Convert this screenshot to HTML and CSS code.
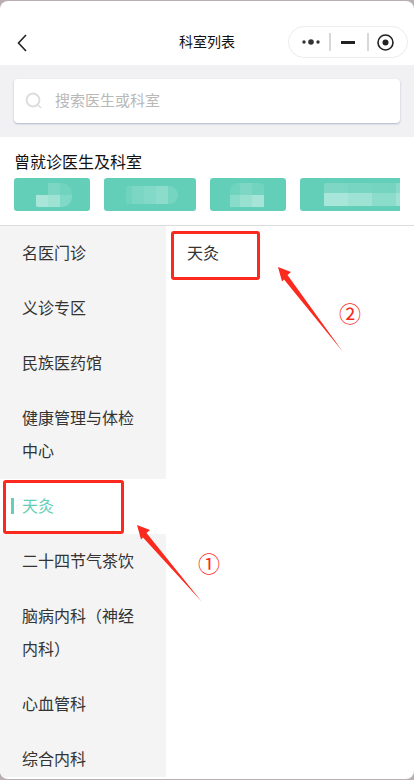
FILE: index.html
```html
<!DOCTYPE html>
<html lang="zh-CN">
<head>
  <meta name="viewport" content="width=device-width, initial-scale=1.0">
  <meta charset="UTF-8">
  <title>科室列表</title>
  <link rel="stylesheet" href="styles.css">
</head>
<body>
  <div class="page">
    <!-- 导航栏 -->
    <header class="nav">
      <svg class="nav-back" width="10" height="18" viewBox="0 0 10 18"><path d="M9 1 1.500 9 9 17" fill="none" stroke="#222" stroke-width="1.6"/></svg>
      <span class="nav-title">科室列表</span>
      <div class="capsule">
        <svg width="20" height="6" viewBox="0 0 20 6"><circle cx="3" cy="3" r="1.7" fill="#333"/><circle cx="10" cy="3" r="2.8" fill="#333"/><circle cx="17" cy="3" r="1.7" fill="#333"/></svg>
        <span class="capsule-line"></span>
        <span class="capsule-dash"></span>
        <span class="capsule-line"></span>
        <svg width="17" height="17" viewBox="0 0 17 17"><circle cx="8.500" cy="8.500" r="7.500" fill="none" stroke="#222" stroke-width="1.6"/><circle cx="8.500" cy="8.500" r="3" fill="#222"/></svg>
      </div>
    </header>

    <!-- 搜索 -->
    <div class="search-wrap">
      <div class="search-box">
        <svg width="18" height="18" viewBox="0 0 18 18"><circle cx="8" cy="8" r="6.400" fill="none" stroke="#ddd" stroke-width="2"/><path d="M13 13l3 3" stroke="#ddd" stroke-width="1.6"/></svg>
        <span class="search-text">搜索医生或科室</span>
      </div>
    </div>

    <!-- 曾就诊 -->
    <section class="history">
      <h2>曾就诊医生及科室</h2>
      <div class="tags">
        <div class="tag tag1"><i class="blur b1"></i></div>
        <div class="tag tag2"><i class="blur b2"></i></div>
        <div class="tag tag1"><i class="blur b3"></i></div>
        <div class="tag tag3"><i class="blur b4"></i></div>
      </div>
    </section>

    <!-- 科室列表 -->
    <div class="dept">
      <ul class="side">
        <li>名医门诊</li>
        <li>义诊专区</li>
        <li>民族医药馆</li>
        <li>健康管理与体检中心</li>
        <li class="active">天灸</li>
        <li>二十四节气茶饮</li>
        <li>脑病内科（神经内科）</li>
        <li>心血管科</li>
        <li>综合内科</li>
      </ul>
      <div class="sub">
        <div class="sub-item">天灸</div>
      </div>
    </div>

    <!-- 标注 -->
    <div class="mark mark1"></div>
    <div class="mark mark2"></div>
    <svg class="arrow arrow1" width="70" height="82" viewBox="0 0 70 82"><path d="M2 2 15 7 11.500 10 67 79 8 14.500 6 16.500Z" fill="#fb2a1e"/></svg>
    <svg class="arrow arrow2" width="70" height="90" viewBox="0 0 70 90"><path d="M2 2 15 7 11.500 10 67 87 8 14.500 6 16.500Z" fill="#fb2a1e"/></svg>
    <span class="num num1">①</span>
    <span class="num num2">②</span>
  </div>
</body>
</html>
```

FILE: styles.css
```css
* {
  margin: 0;
  padding: 0;
  box-sizing: border-box;
}

body {
  background-color: #b9aeb0;
  font-family: "Noto Sans CJK SC", "Noto Sans", sans-serif;
  height: 780px;
  overflow: hidden;
}

.page {
  position: relative;
  width: 414px;
  height: 778px;
  margin-top: 1px;
  background-color: #fff;
  border-radius: 8px;
  overflow: hidden;
}

/* 导航栏 */
.nav {
  position: relative;
  height: 64px;
  display: flex;
  justify-content: center;
  align-items: flex-start;
  padding-top: 25px;
}

.nav-back {
  position: absolute;
  left: 17px;
  top: 33px;
}

.nav-title {
  font-size: 14px;
  line-height: 30px;
  color: #111;
}

.capsule {
  position: absolute;
  left: 288px;
  top: 25px;
  width: 120px;
  height: 32px;
  border: 1px solid #ececec;
  border-radius: 16px;
  display: flex;
  align-items: center;
  padding-left: 12px;
}

.capsule-line {
  width: 2px;
  height: 18px;
  background-color: #d8d8d8;
  margin: 0 10px 0 8px;
}

.capsule-dash {
  width: 14px;
  height: 3px;
  background-color: #222;
}

.capsule-dash + .capsule-line {
  margin: 0 8px 0 12px;
}

/* 搜索 */
.search-wrap {
  height: 72px;
  background-color: #f1f1f3;
  padding: 14px 14px 0;
}

.search-box {
  height: 44px;
  background-color: #fff;
  border-radius: 4px;
  box-shadow: 0 1px 2px rgba(120, 135, 170, 0.55);
  display: flex;
  align-items: center;
  gap: 12px;
  padding-left: 11px;
}

.search-text {
  font-size: 15px;
  line-height: 20px;
  padding-bottom: 2px;
  color: #b8b8b8;
}

/* 曾就诊 */
.history {
  height: 89px;
  padding: 13px 14px 0;
  border-bottom: 1px solid #dcdcdc;
}

.history h2 {
  font-size: 16px;
  font-weight: 400;
  line-height: 22px;
  color: #111;
  margin-bottom: 6px;
}

.tags {
  display: flex;
  gap: 14px;
  overflow: hidden;
}

.tag {
  height: 33px;
  flex-shrink: 0;
  background-color: #64cfb8;
  border-radius: 3px;
  display: flex;
  align-items: center;
}

.tag1 { width: 76px; }
.tag2 { width: 92px; }
.tag3 { width: 112px; }

/* 打码 */
.blur {
  display: block;
  height: 24px;
  border-radius: 2px 10px 10px 2px;
}

.b1 {
  width: 36px;
  margin-left: 22px;
  background:
    linear-gradient(to right, #a9e6d9 12px, #9de2d3 12px, #9de2d3 24px, #80d9c6 24px) bottom / 100% 50% no-repeat,
    linear-gradient(to right, #64cfb8 12px, #7bd7c3 12px, #7bd7c3 24px, #6fd3be 24px) top / 100% 50% no-repeat;
}

.b2 {
  width: 52px;
  height: 18px;
  margin-left: 22px;
  background: linear-gradient(to right, #70d3be 6px, #7bd7c4 6px, #7bd7c4 18px, #82d9c8 18px, #82d9c8 30px, #8bdccb 30px, #8bdccb 42px, #76d5c1 42px);
}

.b3 {
  width: 34px;
  margin-left: 20px;
  border-radius: 8px 4px 0 0;
  background:
    linear-gradient(to right, #8adcca 10px, #98e1d1 10px, #98e1d1 22px, #a5e4d6 22px) bottom / 100% 50% no-repeat,
    linear-gradient(to right, #6fd3be 10px, #7dd7c4 10px, #7dd7c4 22px, #72d4bf 22px) top / 100% 50% no-repeat;
}

.b4 {
  width: 88px;
  margin-left: 24px;
  background:
    linear-gradient(to right, #a8e6da 24px, #9de2d3 24px, #9de2d3 48px, #8cdccb 48px, #8cdccb 72px, #9fe3d5 72px) bottom / 100% 55% no-repeat,
    linear-gradient(to right, #7dd7c4 24px, #77d5c1 24px, #77d5c1 48px, #74d4c0 48px, #74d4c0 72px, #88dbca 72px) top / 100% 45% no-repeat;
}

/* 科室列表 */
.dept {
  display: flex;
  height: 551px;
}

.side {
  width: 166px;
  list-style: none;
  background-color: #f4f4f4;
  overflow: hidden;
}

.side li {
  padding: 10px 22px 12px;
  font-size: 16px;
  line-height: 33px;
  color: #333;
}

.side .active {
  position: relative;
  background-color: #fff;
  color: #64cfb8;
}

.side .active::before {
  content: "";
  position: absolute;
  left: 11px;
  top: 19px;
  width: 3px;
  height: 16px;
  background-color: #64cfb8;
}

.sub {
  flex: 1;
  padding: 0 0 0 21px;
}

.sub-item {
  font-size: 16px;
  line-height: 55px;
  margin-top: -1px;
  color: #333;
}

/* 标注 */
.mark {
  position: absolute;
  border: 3px solid #fb2a1e;
  border-radius: 3px;
}

.mark1 {
  left: 3px;
  top: 479px;
  width: 121px;
  height: 54px;
}

.mark2 {
  left: 171px;
  top: 230px;
  width: 89px;
  height: 49px;
}

.arrow {
  position: absolute;
}

.arrow1 {
  left: 135px;
  top: 522px;
}

.arrow2 {
  left: 276px;
  top: 264px;
}

.num {
  position: absolute;
  font-size: 22px;
  line-height: 24px;
  color: #fb2a1e;
}

.num1 {
  left: 198px;
  top: 549px;
}

.num2 {
  left: 339px;
  top: 299px;
}
```
